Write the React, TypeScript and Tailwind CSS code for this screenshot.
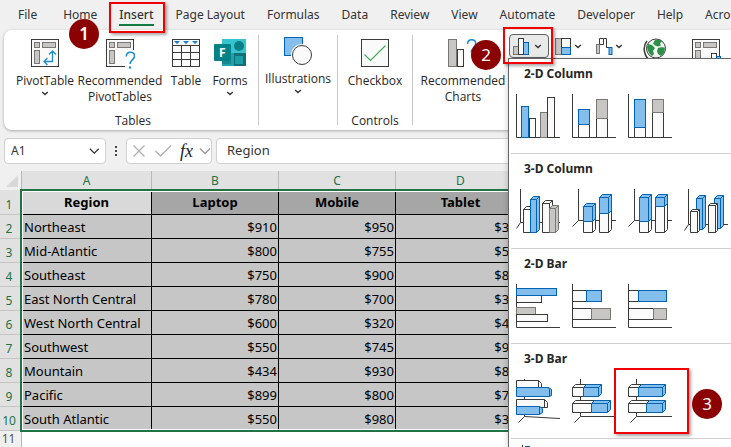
import { ReactNode, useState } from 'react';

type Tone = 'blue' | 'gray' | 'white';

const fills: Record<Tone, string> = { blue: '#83beec', gray: '#c8c6c4', white: '#fafafa' };
const strokes: Record<Tone, string> = { blue: '#0063b1', gray: '#797774', white: '#3a3a38' };

const tabs = [
  'File',
  'Home',
  'Insert',
  'Page Layout',
  'Formulas',
  'Data',
  'Review',
  'View',
  'Automate',
  'Developer',
  'Help',
  'Acro',
];

const rows = [
  ['Northeast', '$910', '$950', '$350'],
  ['Mid-Atlantic', '$800', '$755', '$550'],
  ['Southeast', '$750', '$900', '$850'],
  ['East North Central', '$780', '$700', '$350'],
  ['West North Central', '$600', '$320', '$450'],
  ['Southwest', '$550', '$745', '$950'],
  ['Mountain', '$434', '$930', '$850'],
  ['Pacific', '$899', '$800', '$750'],
  ['South Atlantic', '$550', '$980', '$350'],
];

// flat bar, given by its corners
function Bar({ x1, y1, x2, y2, tone }: { x1: number; y1: number; x2: number; y2: number; tone: Tone }) {
  return <rect x={x1} y={y1} width={x2 - x1} height={y2 - y1} fill={fills[tone]} stroke={strokes[tone]} />;
}

// bar with a top and a right face
function Box({ x1, y1, x2, y2, tone, d = 3 }: { x1: number; y1: number; x2: number; y2: number; tone: Tone; d?: number }) {
  return (
    <g fill={fills[tone]} stroke={strokes[tone]} strokeLinejoin="round">
      <path d={`M${x1} ${y1}l${d} ${-d}H${x2 + d}V${y2 - d}L${x2} ${y2}H${x1}Z`} />
      <path d={`M${x1} ${y1}H${x2}V${y2}M${x2} ${y1}l${d} ${-d}`} fill="none" />
    </g>
  );
}

function Chart({ axis, children }: { axis: string; children: ReactNode }) {
  return (
    <svg width="44" height="44" viewBox="0 0 44 44">
      <path d={axis} fill="none" stroke="#3a3a38" />
      {children}
    </svg>
  );
}

const flatAxis = 'M.5 0V43.5H44';

const sections = [
  {
    title: '2-D Column',
    charts: [
      {
        name: 'Clustered Column',
        icon: (
          <Chart axis={flatAxis}>
            <Bar x1={13.5} y1={24.5} x2={19.5} y2={43.5} tone="white" />
            <Bar x1={5.5} y1={12.5} x2={12.5} y2={43.5} tone="blue" />
            <Bar x1={24.5} y1={18.5} x2={31.5} y2={43.5} tone="gray" />
            <Bar x1={31.5} y1={3.5} x2={38.5} y2={43.5} tone="white" />
          </Chart>
        ),
      },
      {
        name: 'Stacked Column',
        icon: (
          <Chart axis={flatAxis}>
            <Bar x1={6.5} y1={30.5} x2={17.5} y2={43.5} tone="white" />
            <Bar x1={6.5} y1={15.5} x2={17.5} y2={30.5} tone="blue" />
            <Bar x1={24.5} y1={24.5} x2={35.5} y2={43.5} tone="white" />
            <Bar x1={24.5} y1={5.5} x2={35.5} y2={24.5} tone="gray" />
          </Chart>
        ),
      },
      {
        name: '100% Stacked Column',
        icon: (
          <Chart axis={flatAxis}>
            <Bar x1={6.5} y1={33.5} x2={17.5} y2={43.5} tone="white" />
            <Bar x1={6.5} y1={5.5} x2={17.5} y2={33.5} tone="blue" />
            <Bar x1={24.5} y1={18.5} x2={35.5} y2={43.5} tone="white" />
            <Bar x1={24.5} y1={5.5} x2={35.5} y2={18.5} tone="gray" />
          </Chart>
        ),
      },
    ],
  },
  {
    title: '3-D Column',
    charts: [
      {
        name: '3-D Clustered Column',
        icon: (
          <Chart axis="M4.5 0V33.5L.5 39.5M4.5 33.5H44">
            <Box x1={7.5} y1={20.5} x2={14.5} y2={43.5} tone="white" />
            <Box x1={14.5} y1={10.5} x2={20.5} y2={43.5} tone="blue" />
            <Box x1={26.5} y1={14.5} x2={33.5} y2={43.5} tone="white" />
            <Box x1={33.5} y1={19.5} x2={39.5} y2={43.5} tone="gray" />
          </Chart>
        ),
      },
      {
        name: '3-D Stacked Column',
        icon: (
          <Chart axis="M6.5 0V31.5L.5 37.5M6.5 31.5H44">
            <Box x1={11.5} y1={32.5} x2={20.5} y2={43.5} tone="white" />
            <Box x1={11.5} y1={17.5} x2={20.5} y2={32.5} tone="blue" />
            <Box x1={27.5} y1={24.5} x2={36.5} y2={43.5} tone="white" />
            <Box x1={27.5} y1={8.5} x2={36.5} y2={24.5} tone="blue" />
          </Chart>
        ),
      },
      {
        name: '3-D 100% Stacked Column',
        icon: (
          <Chart axis="M6.5 0V31.5L.5 37.5M6.5 31.5H44">
            <Box x1={11.5} y1={32.5} x2={20.5} y2={43.5} tone="white" />
            <Box x1={11.5} y1={8.5} x2={20.5} y2={32.5} tone="blue" />
            <Box x1={27.5} y1={17.5} x2={36.5} y2={43.5} tone="white" />
            <Box x1={27.5} y1={8.5} x2={36.5} y2={17.5} tone="blue" />
          </Chart>
        ),
      },
      {
        name: '3-D Column',
        icon: (
          <Chart axis="M4.5 0V35.5L.5 41.5M4.5 35.5H44">
            <Box x1={12.5} y1={9.5} x2={18.5} y2={40.5} tone="blue" />
            <Box x1={6.5} y1={22.5} x2={13.5} y2={43.5} tone="white" d={2} />
            <Box x1={30.5} y1={9.5} x2={36.5} y2={39.5} tone="blue" />
            <Box x1={24.5} y1={16.5} x2={31.5} y2={43.5} tone="white" d={2} />
          </Chart>
        ),
      },
    ],
  },
  {
    title: '2-D Bar',
    charts: [
      {
        name: 'Clustered Bar',
        icon: (
          <Chart axis={flatAxis}>
            <Bar x1={0.5} y1={11.5} x2={25.5} y2={18.5} tone="white" />
            <Bar x1={0.5} y1={4.5} x2={40.5} y2={11.5} tone="blue" />
            <Bar x1={0.5} y1={23.5} x2={19.5} y2={30.5} tone="gray" />
            <Bar x1={0.5} y1={30.5} x2={31.5} y2={37.5} tone="white" />
          </Chart>
        ),
      },
      {
        name: 'Stacked Bar',
        icon: (
          <Chart axis={flatAxis}>
            <Bar x1={0.5} y1={6.5} x2={14.5} y2={17.5} tone="white" />
            <Bar x1={14.5} y1={6.5} x2={29.5} y2={17.5} tone="blue" />
            <Bar x1={0.5} y1={24.5} x2={19.5} y2={35.5} tone="white" />
            <Bar x1={19.5} y1={24.5} x2={38.5} y2={35.5} tone="gray" />
          </Chart>
        ),
      },
      {
        name: '100% Stacked Bar',
        icon: (
          <Chart axis={flatAxis}>
            <Bar x1={0.5} y1={6.5} x2={10.5} y2={17.5} tone="white" />
            <Bar x1={10.5} y1={6.5} x2={38.5} y2={17.5} tone="blue" />
            <Bar x1={0.5} y1={24.5} x2={25.5} y2={35.5} tone="white" />
            <Bar x1={25.5} y1={24.5} x2={38.5} y2={35.5} tone="gray" />
          </Chart>
        ),
      },
    ],
  },
  {
    title: '3-D Bar',
    charts: [
      {
        name: '3-D Clustered Bar',
        icon: (
          <Chart axis="M8.5 0V37.5L2.5 43.5M8.5 37.5L44 39.5">
            <g strokeLinejoin="round">
              <path d="M.5 1.5H22.5L25.5 4.5V8.5H.5Z" fill="#fafafa" stroke="#3a3a38" />
              <path d="M22.5 1.5V8.5" stroke="#3a3a38" />
              <path d="M.5 8.5H32.5L35.5 10.5V16.5L33.5 17.5H.5Z" fill="#83beec" stroke="#0063b1" />
              <path d="M32.5 8.5L33.5 10.5V17.5" fill="none" stroke="#0063b1" />
              <path d="M.5 20.5H28.5L31.5 23.5V28.5H.5Z" fill="#fafafa" stroke="#3a3a38" />
              <path d="M28.5 20.5V28.5" stroke="#3a3a38" />
              <path d="M.5 27.5H23.5L26.5 29.5V33.5L23.5 35.5H.5Z" fill="#83beec" stroke="#0063b1" />
              <path d="M23.5 27.5V35.5" stroke="#0063b1" />
            </g>
          </Chart>
        ),
      },
      {
        name: '3-D Stacked Bar',
        icon: (
          <Chart axis="M8.5 0V37.5L2.5 43.5M8.5 37.5H44">
            <Box x1={0.5} y1={8.5} x2={11.5} y2={17.5} tone="white" />
            <Box x1={11.5} y1={8.5} x2={26.5} y2={17.5} tone="blue" />
            <Box x1={0.5} y1={24.5} x2={19.5} y2={33.5} tone="white" />
            <Box x1={19.5} y1={24.5} x2={35.5} y2={33.5} tone="blue" />
          </Chart>
        ),
      },
      {
        name: '3-D 100% Stacked Bar',
        icon: (
          <Chart axis="M8.5 0V37.5L2.5 43.5M8.5 37.5H44">
            <Box x1={0.5} y1={8.5} x2={10.5} y2={17.5} tone="white" />
            <Box x1={10.5} y1={8.5} x2={34.5} y2={17.5} tone="blue" />
            <Box x1={0.5} y1={24.5} x2={18.5} y2={33.5} tone="white" />
            <Box x1={18.5} y1={24.5} x2={34.5} y2={33.5} tone="blue" />
          </Chart>
        ),
      },
    ],
  },
];

function Chevron() {
  return (
    <svg width="8" height="5" viewBox="0 0 8 5" fill="none" stroke="#333" strokeWidth="1.4">
      <path d="M1.2 1L4 3.6 6.8 1" />
    </svg>
  );
}

function WideChevron({ color }: { color: string }) {
  return (
    <svg width="12" height="8" viewBox="0 0 12 8" fill="none" stroke={color} strokeWidth="1.4">
      <path d="M1 1.5L6 6.5 11 1.5" />
    </svg>
  );
}

function PivotIcon({ question = false }: { question?: boolean }) {
  return (
    <svg width="30" height="30" viewBox="0 0 30 30" fill="none">
      <rect x="1.5" y=".5" width="27" height="27" fill="#fafafa" stroke="#3a3a38" />
      <g fill="#c8c6c4" stroke="#797774">
        <rect x="4.5" y="3.5" width="5" height="5" />
        <rect x="12.5" y="3.5" width="13" height="5" />
        <rect x="4.5" y="11.5" width="5" height="13" />
      </g>
      {question ? (
        <>
          <path d="M20 11H30V30H20Z" fill="#fff" />
          <path d="M21.3 17.5c0-2.7 1.8-4.3 4.2-4.3 2.3 0 4 1.4 4 3.8 0 3.8-4.4 4-4.4 8" stroke="#1e8bcd" strokeWidth="1.5" />
          <circle cx="25" cy="28.5" r="1.2" fill="#1e8bcd" />
        </>
      ) : (
        <path d="M22.5 12V22.5H14M19 15.5L22.5 12 26 15.5M17.5 19L14 22.5 17.5 26" stroke="#1e8bcd" strokeWidth="1.3" />
      )}
    </svg>
  );
}

function TableIcon() {
  return (
    <svg width="30" height="30" viewBox="0 0 30 30" fill="none">
      <rect x="1.5" y=".5" width="27" height="27" fill="#fafafa" stroke="#3a3a38" />
      <path d="M1.5 6.5H28.5M1.5 13.5H28.5M1.5 20.5H28.5M10.5 6.5V27.5M19.5 6.5V27.5" stroke="#3a3a38" />
      <path d="M3 2H9L6 5ZM12 2H18L15 5ZM21 2H27L24 5Z" fill="#0f7fd0" />
    </svg>
  );
}

function FormsIcon() {
  return (
    <svg width="32" height="28" viewBox="0 0 32 28">
      <path d="M8 0H32V27H8Z" fill="#1fa3a8" />
      <path d="M8 0H32V14H8Z" fill="#36c5cf" />
      <circle cx="25" cy="7" r="5" fill="#0b7f86" />
      <path d="M20 14H32V27H20Z" fill="#127178" />
      <path d="M21 17H29V25H21Z" fill="#1b9ea6" />
      <path d="M8 22H17V25H8Z" fill="#0e6b70" opacity=".5" />
      <rect x="0" y="5" width="17" height="17" rx="1" fill="#038387" />
      <text x="5" y="18" fontFamily="Noto Sans" fontWeight="700" fontSize="12" fill="#fff">
        F
      </text>
    </svg>
  );
}

function ShapesIcon() {
  return (
    <svg width="30" height="30" viewBox="0 0 30 30">
      <rect x="1.5" y=".5" width="18" height="18" fill="#83beec" stroke="#0063b1" />
      <circle cx="19" cy="18" r="11" fill="#fff" />
      <circle cx="19" cy="18" r="9.5" fill="#fafafa" stroke="#3a3a38" />
    </svg>
  );
}

function CheckboxIcon() {
  return (
    <svg width="30" height="30" viewBox="0 0 30 30" fill="none">
      <rect x="1.5" y=".5" width="27" height="27" fill="#fafafa" stroke="#3a3a38" />
      <path d="M4.5 15.5L10.5 21.5 25.5 6.5" stroke="#3fae5a" strokeWidth="1.2" />
    </svg>
  );
}

function RecommendedChartsIcon() {
  return (
    <svg width="30" height="30" viewBox="0 0 30 30" fill="none">
      <rect x=".5" y=".5" width="8" height="27" fill="#c8c6c4" stroke="#797774" />
      <rect x="9.5" y="10.5" width="6" height="17" fill="#fafafa" stroke="#3a3a38" />
      <path d="M19.5 5c0-3 1.8-4.3 4.2-4.3 2.3 0 4 1.4 4 3.8 0 3.8-4.4 4-4.4 9" stroke="#1e8bcd" strokeWidth="1.5" />
    </svg>
  );
}

interface BigButtonProps {
  icon: ReactNode;
  label: string;
  second?: string;
  arrow?: boolean;
  className: string;
}

function BigButton({ icon, label, second, arrow, className }: BigButtonProps) {
  return (
    <button type="button" className={`flex shrink-0 flex-col items-center leading-4 ${className}`}>
      <span className="mb-1.5 h-7">{icon}</span>
      <span className="whitespace-nowrap">{label}</span>
      {second && <span>{second}</span>}
      {arrow && (
        <span className="mt-0.5">
          <Chevron />
        </span>
      )}
    </button>
  );
}

function Group({ label, className, children }: { label?: string; className: string; children: ReactNode }) {
  return (
    <div className={`flex shrink-0 flex-col items-center justify-between ${className}`}>
      <div className="flex">{children}</div>
      {label && <div className="leading-4">{label}</div>}
    </div>
  );
}

function Divider() {
  return <div className="-mt-px mb-1 w-px shrink-0 bg-[#c8c8c8]" />;
}

function Ribbon() {
  return (
    <div className="ml-1 flex h-[100px] shrink-0 overflow-hidden rounded-l-lg bg-white pt-1.5 pb-px font-['Open_Sans',sans-serif] text-[12px] text-[#262626] shadow-[0_1px_3px_rgba(0,0,0,0.3)]">
      <Group label="Tables" className="w-[254px] pt-[3px] pl-1">
        <BigButton icon={<PivotIcon />} label="PivotTable" arrow className="w-[62px]" />
        <BigButton icon={<PivotIcon question />} label="Recommended" second="PivotTables" className="w-[88px]" />
        <BigButton icon={<TableIcon />} label="Table" className="w-[44px]" />
        <BigButton icon={<FormsIcon />} label="Forms" arrow className="w-[44px]" />
      </Group>
      <Divider />
      <Group className="w-[78px] pt-px">
        <BigButton icon={<ShapesIcon />} label="Illustrations" arrow className="w-[78px]" />
      </Group>
      <Divider />
      <Group label="Controls" className="w-[74px] pt-[3px]">
        <BigButton icon={<CheckboxIcon />} label="Checkbox" className="w-[74px]" />
      </Group>
      <Divider />
      <div className="flex shrink-0 items-start">
        <BigButton icon={<RecommendedChartsIcon />} label="Recommended" second="Charts" className="ml-1 w-[92px] pt-[3px]" />
        <button
          type="button"
          aria-label="Insert Column or Bar Chart"
          className="-mt-0.5 flex h-6 w-10 items-center gap-1 rounded border border-[#5f5f5f] bg-[#e9e9e9] pl-[3px]"
        >
          <svg width="17" height="17" viewBox="0 0 17 17">
            <rect x=".5" y="8.5" width="5" height="8" fill="#c8c6c4" stroke="#797774" />
            <rect x="10.5" y="4.5" width="5" height="12" fill="#83beec" stroke="#0063b1" />
            <rect x="5.5" y=".5" width="5" height="16" fill="#fafafa" stroke="#3a3a38" />
          </svg>
          <Chevron />
        </button>
        <button type="button" aria-label="Insert Hierarchy Chart" className="ml-1.5 flex h-5 items-center gap-0.5">
          <svg width="17" height="17" viewBox="0 0 17 17">
            <rect x=".5" y=".5" width="6" height="16" fill="#c8c6c4" stroke="#797774" />
            <rect x="6.5" y=".5" width="9" height="9" fill="#fafafa" stroke="#3a3a38" />
            <rect x="6.5" y="9.5" width="9" height="7" fill="#83beec" stroke="#0063b1" />
          </svg>
          <Chevron />
        </button>
        <button type="button" aria-label="Insert Waterfall Chart" className="ml-3.5 flex h-5 items-center gap-0.5">
          <svg width="17" height="17" viewBox="0 0 17 17">
            <rect x=".5" y="6.5" width="3" height="9" fill="#c8c6c4" stroke="#797774" />
            <path d="M3.5 6V.5H7.5V6.5H3.5M7.5.5H10.5V9.5" fill="#fafafa" stroke="#3a3a38" />
            <path d="M10.5 4.5V9.5H13.5" fill="none" stroke="#3a3a38" />
            <rect x="13" y="9.5" width="3" height="7" fill="#83beec" stroke="#0063b1" />
          </svg>
          <Chevron />
        </button>
        <button type="button" aria-label="Maps" className="ml-5 pt-0.5">
          <svg width="24" height="24" viewBox="0 0 24 24">
            <circle cx="13" cy="10.5" r="9.5" fill="#f4f4f4" stroke="#3a3a38" />
            <path d="M12 2l5-.5 2 2-2 2 1 2-3 1-3-1-2-2zM5 6l4 1 3 3-2 3 1 3-2 2-3-3-2-5zM15 10l4-1 3 1-1 5-3 3-3-2-1-3z" fill="#2c9147" />
            <path d="M4 3C-1 9 1 19 8 23" fill="none" stroke="#3a3a38" strokeWidth="1.5" />
          </svg>
        </button>
        <button type="button" aria-label="PivotChart" className="ml-6 pt-[3px]">
          <svg width="30" height="28" viewBox="0 0 30 28">
            <rect x="1.5" y=".5" width="27" height="27" fill="#fafafa" stroke="#3a3a38" />
            <g fill="#c8c6c4" stroke="#797774">
              <rect x="4.5" y="3.5" width="5" height="5" />
              <rect x="12.5" y="3.5" width="13" height="5" />
              <rect x="4.5" y="11.5" width="5" height="13" />
            </g>
            <rect x="20.5" y="14.5" width="5" height="13" fill="#fff" stroke="#3a3a38" />
            <rect x="25.5" y="17.5" width="4" height="10" fill="#83beec" stroke="#0063b1" />
          </svg>
        </button>
      </div>
    </div>
  );
}

function FormulaBar() {
  return (
    <div className="mt-2 ml-1 flex h-[26px] shrink-0 items-stretch text-[13px] text-[#333]">
      <div className="flex w-[102px] shrink-0 items-center rounded border border-[#d0d0d0] bg-white pr-[5px] pl-1.5">
        <input aria-label="Name Box" defaultValue="A1" className="w-full min-w-0 text-[12px] outline-none" />
        <WideChevron color="#333" />
      </div>
      <div className="flex w-5 shrink-0 flex-col items-center justify-center gap-0.5">
        <span className="size-0.5 bg-[#444]" />
        <span className="size-0.5 bg-[#444]" />
        <span className="size-0.5 bg-[#444]" />
      </div>
      <div className="flex w-[86px] shrink-0 items-center rounded border border-[#d0d0d0] bg-white pl-1.5">
        <button type="button" aria-label="Cancel">
          <svg width="12" height="12" viewBox="0 0 12 12" fill="none" stroke="#b0b0b0" strokeWidth="1.3">
            <path d="M.5.5L11.5 11.5M11.5.5L.5 11.5" />
          </svg>
        </button>
        <button type="button" aria-label="Enter" className="ml-2.5">
          <svg width="17" height="12" viewBox="0 0 17 12" fill="none" stroke="#b0b0b0" strokeWidth="1.3">
            <path d="M.5 6L5.5 11 16 .5" />
          </svg>
        </button>
        <button type="button" className="ml-2 font-['Liberation_Serif',serif] text-[18px] leading-5 text-[#222] italic">
          fx
        </button>
        <span className="ml-1.5">
          <WideChevron color="#999" />
        </span>
      </div>
      <input
        aria-label="Formula Bar"
        defaultValue="Region"
        className="ml-1 min-w-0 flex-1 rounded-l border border-[#d0d0d0] bg-white pl-2.5 outline-none"
      />
    </div>
  );
}

function Sheet() {
  return (
    <div className="relative mt-[7px] min-h-0 flex-1 bg-white">
      <table className="w-[526px] table-fixed border-separate border-spacing-0 text-[13px] leading-[18px] text-black">
        <colgroup>
          <col className="w-[22px]" />
          <col className="w-[130px]" />
          <col className="w-[127px]" />
          <col className="w-[117px]" />
          <col className="w-[130px]" />
        </colgroup>
        <thead>
          <tr className="h-[19px] bg-[#e1e1e1] text-[12px] text-[#217346]">
            <th aria-label="Select All" className="border-r border-[#b8b8b8] bg-[#f0f0f0] p-0">
              <svg width="12" height="12" viewBox="0 0 12 12" className="ml-1.5">
                <path d="M12 0V12H0Z" fill="#d8d8d8" />
              </svg>
            </th>
            {['A', 'B', 'C', 'D'].map((letter) => (
              <th key={letter} className="border-r border-[#b8b8b8] p-0 font-normal">
                {letter}
              </th>
            ))}
          </tr>
        </thead>
        <tbody>
          <tr className="h-[25px] font-bold">
            <th className="border-b border-[#c4c4c4] bg-[#e1e1e1] p-0 pr-1 align-bottom text-[12px] font-normal text-[#217346]">1</th>
            <th className="border-r border-b border-black bg-[#d9d9d9] p-0">Region</th>
            <th className="border-r border-b border-black bg-[#a6a6a6] p-0">Laptop</th>
            <th className="border-r border-b border-black bg-[#a6a6a6] p-0">Mobile</th>
            <th className="border-r border-b border-black bg-[#a6a6a6] p-0">Tablet</th>
          </tr>
          {rows.map((row, i) => (
            <tr key={row[0]} className="h-6">
              <th className="border-b border-[#c4c4c4] bg-[#e1e1e1] p-0 pr-1 align-bottom text-[12px] font-normal text-[#217346]">
                {i + 2}
              </th>
              {row.map((cell, j) => (
                <td
                  key={j}
                  className={`border-r border-b border-black bg-[#c6c6c6] p-0 whitespace-nowrap ${j === 0 ? 'pl-0.5' : 'pr-px text-right'}`}
                >
                  {cell}
                </td>
              ))}
            </tr>
          ))}
          <tr className="h-4">
            <th className="border-r border-[#b8b8b8] bg-[#f0f0f0] p-0 pr-1 text-[12px] leading-4 font-normal text-[#555]">11</th>
          </tr>
        </tbody>
      </table>
      {/* selection frame */}
      <div className="pointer-events-none absolute top-[18px] left-5 h-[243px] w-[508px] border-2 border-[#217346] shadow-[inset_0_0_0_1px_#fff]" />
    </div>
  );
}

function ChartMenu() {
  return (
    <div className="absolute top-[58px] right-0 bottom-0 left-[508px] overflow-hidden border-t border-l border-[#666] bg-white pl-0.5 shadow-[-2px_0_4px_rgba(0,0,0,0.12)]">
      {sections.map((section) => (
        <section key={section.title} className="h-[95px] border-b border-[#d0d0d0] pt-1.5 pl-[5px]">
          <h3 className="mb-3 pl-2 text-[12px] leading-[17px] font-bold text-[#262626]">{section.title}</h3>
          <div className="flex gap-3">
            {section.charts.map((chart) => (
              <button key={chart.name} type="button" aria-label={chart.name} className="shrink-0">
                {chart.icon}
              </button>
            ))}
          </div>
        </section>
      ))}
      <button type="button" aria-label="More Column Charts" className="block pt-1.5 pl-2.5">
        <svg width="16" height="16" viewBox="0 0 16 16">
          <path d="M1.5 0V15.5H16" fill="none" stroke="#3a3a38" />
          <rect x="4.5" y="1.5" width="4" height="14" fill="#83beec" stroke="#0063b1" />
        </svg>
      </button>
    </div>
  );
}

function Step({ n, className }: { n: number; className: string }) {
  return (
    <div
      className={`absolute flex size-[30px] items-center justify-center rounded-full bg-[#8b0000] font-['Noto_Sans',sans-serif] text-[17px] text-white ${className}`}
    >
      {n}
    </div>
  );
}

export default function App() {
  const [active, setActive] = useState('Insert');

  return (
    <div className="relative flex h-screen flex-col overflow-hidden bg-[#f0f0f0] font-['Noto_Sans',sans-serif]">
      <nav className="flex h-[30px] shrink-0 gap-[22px] pl-[18px] text-[12px] text-[#333]">
        {tabs.map((tab) => (
          <button
            key={tab}
            type="button"
            onClick={() => setActive(tab)}
            className={`flex shrink-0 flex-col justify-center whitespace-nowrap first:mr-1 ${tab === active ? 'font-medium' : ''}`}
          >
            <span className={tab === active ? 'border-b-2 border-[#107c41] pt-0.5' : ''}>{tab}</span>
          </button>
        ))}
      </nav>
      <Ribbon />
      <FormulaBar />
      <Sheet />
      <ChartMenu />

      <div className="pointer-events-none absolute top-0.5 left-[109px] h-[31px] w-14 border-2 border-[#f00000] shadow-[2px_2px_3px_rgba(0,0,0,0.35)]" />
      <div className="pointer-events-none absolute top-[27px] left-[503px] h-[37px] w-[50px] border-2 border-[#f00000] shadow-[2px_2px_3px_rgba(0,0,0,0.35)]" />
      <div className="pointer-events-none absolute top-[368px] left-[614px] h-[66px] w-[75px] border-2 border-[#f00000] shadow-[2px_2px_3px_rgba(0,0,0,0.35)]" />
      <Step n={1} className="top-[19px] left-[69px] font-semibold" />
      <Step n={2} className="top-10 left-[471px]" />
      <Step n={3} className="top-[389px] left-[692px]" />
    </div>
  );
}
